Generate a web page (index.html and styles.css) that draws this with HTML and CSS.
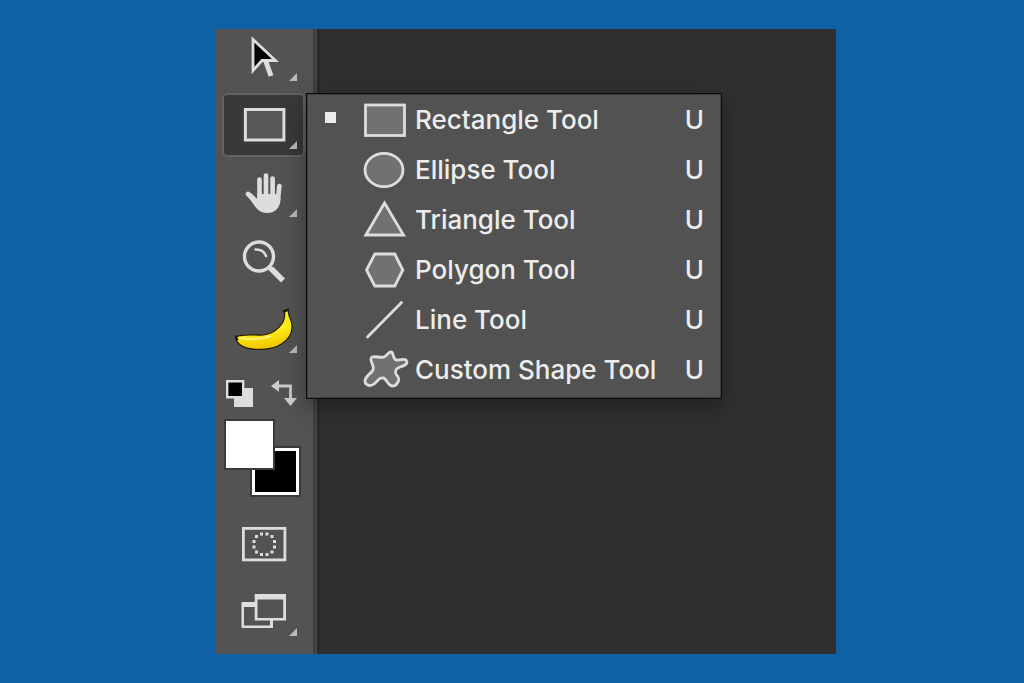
FILE: index.html
```html
<!DOCTYPE html>
<html lang="en">
  <head>
    <meta charset="UTF-8" />
    <meta name="viewport" content="width=device-width, initial-scale=1.0" />
    <title>Shape Tools</title>
    <link rel="stylesheet" href="styles.css">
  </head>
  <body>
    <main class="window">
      <div class="toolbar">
        <button class="tool" aria-label="Path selection">
          <svg viewBox="0 0 83 64">
            <path d="M43 34l6 17" stroke="#ddd" stroke-width="5" />
            <path d="M31 14.5v31l9-10h13.5z" fill="#000" stroke="#ddd" stroke-width="2.8" />
            <path class="corner" d="M75 48v8h-8z" />
          </svg>
        </button>

        <div class="tool-group">
          <button class="tool active" aria-label="Rectangle">
            <svg viewBox="0 0 83 64">
              <rect x="23.4" y="16.5" width="38.5" height="30.5" fill="#575757" stroke="#ddd" stroke-width="3" />
              <path class="corner" d="M75 48v8h-8z" />
            </svg>
          </button>

          <div class="flyout">
            <button class="menu-item">
              <span class="marker"></span>
              <svg viewBox="0 0 46 50"><rect x="2.5" y="11" width="39" height="30.5" /></svg>
              <span>Rectangle Tool</span>
              <span>U</span>
            </button>
            <button class="menu-item">
              <span></span>
              <svg viewBox="0 0 46 50"><ellipse cx="21" cy="26" rx="19" ry="16.6" /></svg>
              <span>Ellipse Tool</span>
              <span>U</span>
            </button>
            <button class="menu-item">
              <span></span>
              <svg viewBox="0 0 46 50"><path d="M21.5 9L40.5 41H2.800z" /></svg>
              <span>Triangle Tool</span>
              <span>U</span>
            </button>
            <button class="menu-item">
              <span></span>
              <svg viewBox="0 0 46 50"><path d="M11.8 10h20l8 16-8 16h-20L3.500 26z" /></svg>
              <span>Polygon Tool</span>
              <span>U</span>
            </button>
            <button class="menu-item">
              <span></span>
              <svg viewBox="0 0 46 50"><path d="M4.5 43L38.5 8.5" stroke-linecap="round" /></svg>
              <span>Line Tool</span>
              <span>U</span>
            </button>
            <button class="menu-item">
              <span></span>
              <svg viewBox="0 0 46 50">
                <path d="M9 13C13 12 17 14 21 13C24 12 25 8 28 8C31 8 29 14 33 16C37 17 40 14 43 16C46 20 41 22 37 23C32 25 32 27 33 30C35 33 37 34 35 38C33 42 30 43 27 41C24 39 23 34 20 34C16 33 14 38 11 40C7 43 2 41 2 37C2 32 8 30 10 26C12 21 5 16 9 13z" />
              </svg>
              <span>Custom Shape Tool</span>
              <span>U</span>
            </button>
          </div>
        </div>

        <button class="tool" aria-label="Hand">
          <svg viewBox="0 0 83 64">
            <g stroke="#ddd" stroke-width="4.6" stroke-linecap="round">
              <path d="M37.5 18.5v18M44 14.5v20M50.6 17.5v18M57.4 25L56 38M26 33l10 10" />
            </g>
            <path d="M35.2 33h21l2.4 4c0 9-5 15-13.6 15-7 0-10-4-13-8l-7-10 4-2 6.2 6z" fill="#ddd" />
            <path class="corner" d="M75 48v8h-8z" />
          </svg>
        </button>

        <button class="tool" aria-label="Zoom">
          <svg viewBox="0 0 83 64" fill="none" stroke="#ddd">
            <circle cx="37" cy="27.5" r="14.5" stroke-width="3.4" />
            <path d="M33.500 20.500c5 0 9 2 10.500 6.500" stroke-width="2.600" stroke-linecap="round" />
            <path d="M46.500 37.500l4 4" stroke-width="4.500" />
            <path d="M49 39.500l12 12" stroke-width="5.600" />
          </svg>
        </button>

        <button class="tool" aria-label="Banana">
          <svg viewBox="0 0 83 64">
            <defs>
              <linearGradient id="peel" x1="0" y1="0" x2="0.2" y2="1">
                <stop offset="0.6" stop-color="#fff01c" />
                <stop offset="1" stop-color="#f0c800" />
              </linearGradient>
            </defs>
            <path d="M62.5 14l3.5-1c.5 5 1.500 8 3.500 12 2 9-2 17-10 22-9 6-31 8-41 1-4-3-5-6-4-8.500 8-3 18-1 27-1.500 9-1 15-6 19-12 2-3 2.500-7 2-12z" fill="url(#peel)" stroke="#241c00" stroke-width="1.200" />
            <path d="M18 41c10 2 21 1 30-1.500" fill="none" stroke="#fffa9c" stroke-width="2" stroke-linecap="round" opacity="0.7" />
            <path d="M61 14.500l6-2M13.700 38.500l1.500 5" stroke="#241c00" stroke-width="2.600" />
            <path class="corner" d="M75 48v8h-8z" />
          </svg>
        </button>

        <div class="color-actions">
          <button aria-label="Default colors">
            <svg viewBox="0 0 27 27">
              <path d="M8 8h19v19H8z" fill="#ddd" />
              <path d="M1.200 1.200h16v16h-16z" fill="#000" stroke="#ddd" stroke-width="2.400" />
            </svg>
          </button>
          <button aria-label="Swap colors">
            <svg viewBox="0 0 27 27">
              <path d="M7 6h12.500v13" fill="none" stroke="#ccc" stroke-width="2.800" />
              <path d="M0 6l8-6v12zM13 18h13l-6.500 8z" fill="#ccc" />
            </svg>
          </button>
        </div>

        <div class="swatches">
          <button class="swatch background" aria-label="Background color"></button>
          <button class="swatch foreground" aria-label="Foreground color"></button>
        </div>

        <button class="tool" aria-label="Quick mask">
          <svg viewBox="0 0 83 64">
            <rect x="21.400" y="16.400" width="41.500" height="31.500" fill="none" stroke="#ddd" stroke-width="2.800" />
            <path d="M38 20.500h3v3h-3zM43.500 20.500h3v3h-3zM48.500 23h3v3h-3zM51 28h3v3h-3zM51 33.500h3v3h-3zM48.500 38.500h3v3h-3zM43.500 41h3v3h-3zM38 41h3v3h-3zM33 38.500h3v3h-3zM30.500 33.500h3v3h-3zM30.500 28h3v3h-3zM33 23h3v3h-3z" fill="#ddd" />
          </svg>
        </button>

        <button class="tool" aria-label="Screen mode">
          <svg viewBox="0 0 83 64">
            <path d="M19.5 22H33v5H22v18.5h26V40h3v8H19.5z" fill="#ddd" />
            <path fill-rule="evenodd" d="M32.700 14H64v26.500H32.700zM35.500 19.500V38h25.700V19.500z" fill="#ddd" />
            <path class="corner" d="M75 48v8h-8z" />
          </svg>
        </button>
      </div>
      <div class="canvas"></div>
    </main>
  </body>
</html>
```
FILE: styles.css
```css
* {
  margin: 0;
  padding: 0;
  box-sizing: border-box;
}

body {
  min-height: 100vh;
  display: flex;
  padding: 29px 188px 29px 216px;
  background-color: #0f61a6;
  font-family: Inter, sans-serif;
}

button {
  border: none;
  background: none;
  font: inherit;
  color: inherit;
  cursor: pointer;
}

svg {
  display: block;
}

.window {
  flex: 1;
  display: flex;
  overflow: hidden;
  background-color: #303030;
}

.toolbar {
  width: 97px;
  padding-left: 6px;
  display: flex;
  flex-direction: column;
  gap: 4px;
  margin-top: -4px;
  background-color: #535353;
}

.canvas {
  flex: 1;
  border-left: 2px solid #3e3e3e;
  box-shadow: inset 2px 0 #454545, inset 5px 0 #2a2a2a;
}

.tool {
  display: block;
  width: 83px;
  height: 64px;
  border-radius: 5px;
}

.tool svg {
  width: 83px;
  height: 64px;
}

.tool.active {
  background-color: #393939;
  box-shadow: inset 0 0 0 2px #626262;
}

.corner {
  fill: #bbb;
}

.tool-group {
  position: relative;
}

.flyout {
  position: absolute;
  left: 84px;
  top: 0;
  z-index: 1;
  width: 416px;
  padding: 0 1px 4px;
  border: 1px solid #0c0c0c;
  background-color: #525252;
  box-shadow: inset 0 0 0 1px #3e3e3e, 0 8px 24px rgba(0, 0, 0, 0.35);
}

.menu-item {
  width: 100%;
  height: 50px;
  padding: 0 16px 0 17px;
  display: grid;
  grid-template-columns: 38px 52px 1fr auto;
  align-items: center;
  font-size: 26px;
  font-weight: 500;
  text-align: left;
  color: #ececec;
}

.menu-item svg {
  width: 46px;
  height: 50px;
  fill: #717171;
  stroke: #ddd;
  stroke-width: 2.8;
}

.marker {
  width: 11px;
  height: 11px;
  margin-bottom: 4px;
  background-color: #ececec;
}

.color-actions {
  display: flex;
  gap: 18px;
  padding: 15px 4px 4px;
}

.color-actions svg {
  width: 27px;
  height: 27px;
}

.swatches {
  position: relative;
  height: 89px;
  margin-top: 4px;
}

.swatch {
  position: absolute;
  width: 51px;
  height: 51px;
  border: 2px solid #3a3a3a;
}

.foreground {
  left: 2px;
  top: 0;
  background-color: #fff;
}

.background {
  left: 28px;
  top: 27px;
  background-color: #000;
  box-shadow: inset 0 0 0 3px #fff;
}
```
